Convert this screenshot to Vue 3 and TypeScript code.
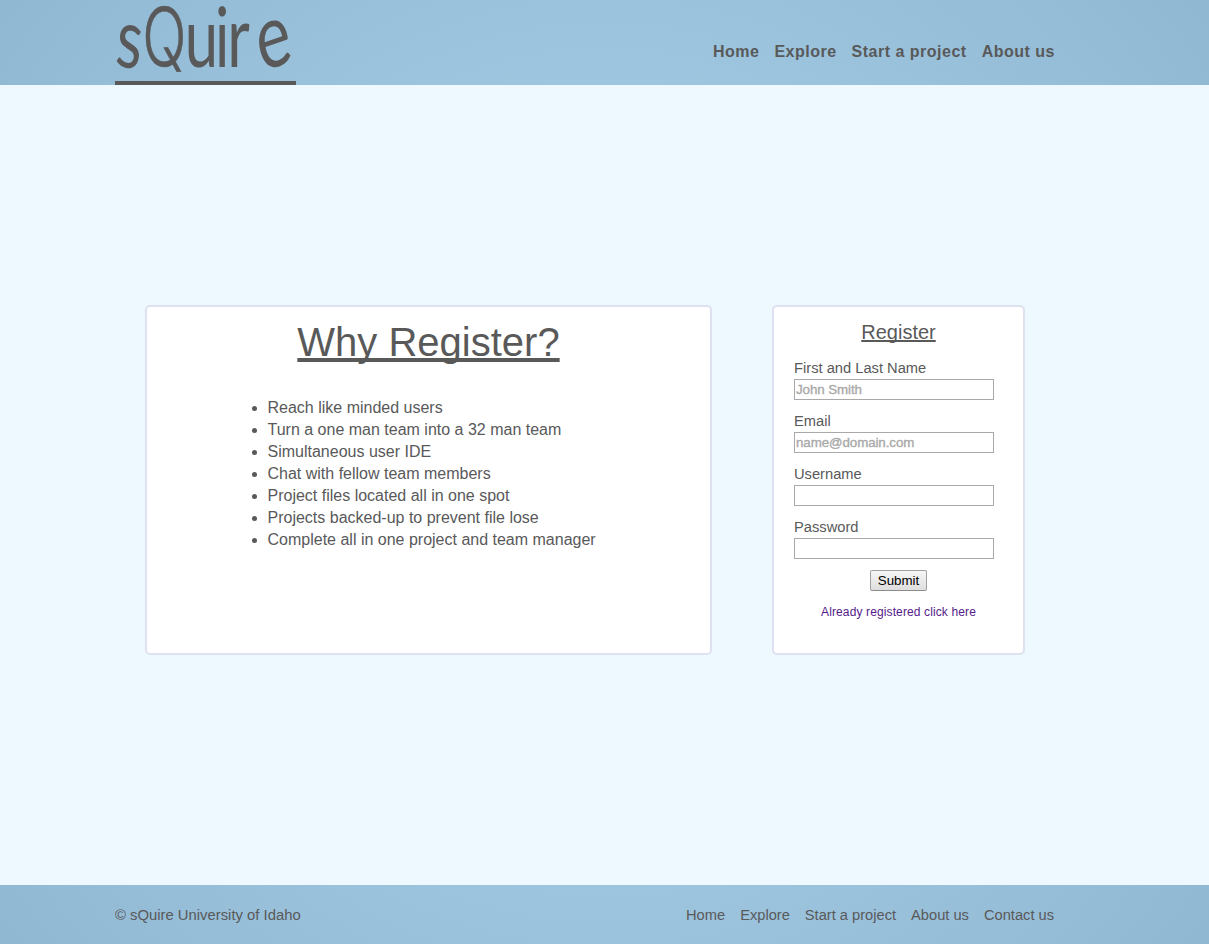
<script setup lang="ts">
interface Field {
  id: string
  label: string
  type: string
  placeholder: string
}

const headerLinks: string[] = ['Home', 'Explore', 'Start a project', 'About us']
const footerLinks: string[] = [...headerLinks, 'Contact us']

const reasons: string[] = [
  'Reach like minded users',
  'Turn a one man team into a 32 man team',
  'Simultaneous user IDE',
  'Chat with fellow team members',
  'Project files located all in one spot',
  'Projects backed-up to prevent file lose',
  'Complete all in one project and team manager',
]

const fields: Field[] = [
  { id: 'name', label: 'First and Last Name', type: 'text', placeholder: 'John Smith' },
  { id: 'email', label: 'Email', type: 'text', placeholder: 'name@domain.com' },
  { id: 'username', label: 'Username', type: 'text', placeholder: '' },
  { id: 'password', label: 'Password', type: 'password', placeholder: '' },
]
</script>

<template>
  <div class="page">
    <header class="bar header">
      <div class="container header-inner">
        <a class="logo">
          <svg width="181" height="81" viewBox="0 0 181 81" aria-label="sQuire">
            <text
              class="wordmark"
              transform="scale(0.72 1)"
              x="-1 38 97 139 156 203"
              y="65 66 67 67 67 72"
              rotate="8 0 0 0 0 -14"
            >s<tspan class="wordmark-q">Q</tspan>ui<tspan class="wordmark-r">r</tspan><tspan class="wordmark-e">e</tspan></text>
          </svg>
        </a>
        <nav class="top-nav">
          <a v-for="link in headerLinks" :key="link">{{ link }}</a>
        </nav>
      </div>
    </header>

    <main class="main">
      <section class="card why">
        <h1>Why Register?</h1>
        <ul>
          <li v-for="reason in reasons" :key="reason">{{ reason }}</li>
        </ul>
      </section>

      <section class="card register">
        <h2>Register</h2>
        <form @submit.prevent>
          <div v-for="field in fields" :key="field.id" class="field">
            <label :for="field.id">{{ field.label }}</label>
            <input :id="field.id" :type="field.type" :placeholder="field.placeholder" />
          </div>
          <button type="submit">Submit</button>
        </form>
        <a class="login">Already registered click here</a>
      </section>
    </main>

    <footer class="bar footer">
      <div class="container footer-inner">
        <span class="copyright">© sQuire University of Idaho</span>
        <nav class="bottom-nav">
          <a v-for="link in footerLinks" :key="link">{{ link }}</a>
        </nav>
      </div>
    </footer>
  </div>
</template>

<style>
body {
  margin: 0;
}
</style>

<style scoped>
.page {
  display: flex;
  flex-direction: column;
  height: 944px;
  box-sizing: border-box;
  color: #59595a;
  font-family: "Liberation Sans", Arial, sans-serif;
  background: radial-gradient(circle at 50% 50%, #aad3ec 0%, #91b8d2 100%);
}

.container {
  width: 940px;
  margin-left: 115px;
  display: flex;
  justify-content: space-between;
}

.header {
  height: 85px;
  flex: none;
}

.logo {
  display: block;
  height: 81px;
  border-bottom: 4px solid #59595a;
}

.logo svg {
  display: block;
  overflow: visible;
}

.wordmark {
  font-family: Lato, sans-serif;
  font-size: 83px;
  font-weight: 400;
  fill: #59595a;
}

.wordmark-q {
  font-family: Inter, sans-serif;
  font-weight: 300;
  font-size: 81px;
  stroke: #59595a;
  stroke-width: 0.6px;
}

.wordmark-r {
  font-size: 86px;
}

.wordmark-e {
  font-size: 90px;
}

.top-nav {
  display: flex;
  gap: 15px;
  padding-top: 43px;
  font-size: 16px;
  line-height: 18px;
  font-weight: bold;
  letter-spacing: 0.5px;
}

.main {
  flex: 1;
  display: flex;
  align-items: flex-start;
  gap: 60px;
  padding: 220px 0 0 145px;
  background: #edf9ff;
}

.card {
  box-sizing: border-box;
  height: 350px;
  border: 2px solid #dfe1f1;
  border-radius: 5px;
  background: #fff;
}

.why {
  width: 567px;
}

h1,
h2 {
  font-weight: normal;
  text-align: center;
  text-decoration: underline;
  text-decoration-skip-ink: none;
}

h1 {
  margin: 12px 0 0;
  font-size: 40px;
  line-height: 46px;
}

ul {
  margin: 32px 0 0;
  padding-left: 120.5px;
  font-size: 16px;
  line-height: 22px;
}

.register {
  width: 253px;
  display: flex;
  flex-direction: column;
}

h2 {
  margin: 13px 0 0;
  font-size: 20px;
  line-height: 24px;
}

form {
  display: flex;
  flex-direction: column;
  margin-top: 14px;
  padding-left: 20px;
}

.field {
  display: flex;
  flex-direction: column;
  width: 200px;
  margin-bottom: 11px;
}

label {
  font-size: 14.7px;
  line-height: 21px;
}

input {
  box-sizing: border-box;
  height: 21px;
  border: 1px solid #a9a9a9;
  padding: 1px;
  margin: 0;
  font: 13.33px "Liberation Sans", Arial, sans-serif;
  background: #fff;
}

input::placeholder {
  color: #a9a9a9;
  opacity: 1;
  letter-spacing: -0.08px;
  -webkit-text-stroke: 0.35px #a9a9a9;
}

button {
  box-sizing: border-box;
  align-self: center;
  width: 57px;
  height: 21px;
  margin: 0 20px 0 0;
  padding: 0;
  border: 1px solid #a0a0a0;
  border-bottom-color: #8c8c8c;
  border-radius: 2px;
  background: linear-gradient(#f6f6f6, #dedede);
  color: #000;
  font: 13.33px/17px "Liberation Sans", Arial, sans-serif;
}

.login {
  margin-top: 14px;
  color: #551a8b;
  font-size: 12px;
  line-height: 14px;
  letter-spacing: 0.12px;
  text-align: center;
}

.footer {
  height: 59px;
  flex: none;
}

.footer-inner {
  padding-top: 21px;
  font-size: 14.67px;
  line-height: 18px;
}

.copyright {
  font-size: 14.83px;
}

.bottom-nav {
  display: flex;
  gap: 15px;
  padding-right: 1px;
}
</style>
